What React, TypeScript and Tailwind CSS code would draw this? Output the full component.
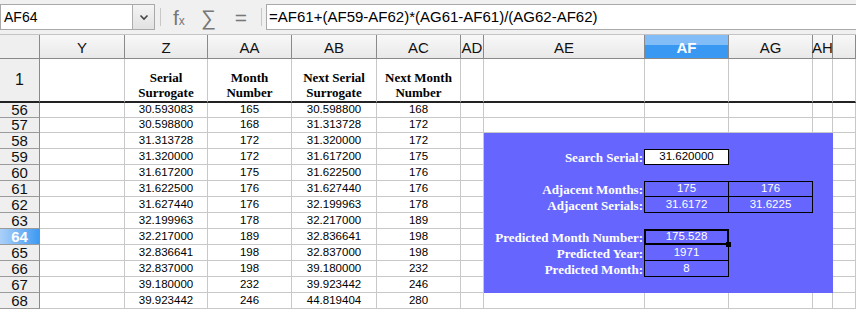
import React from 'react';

const SANS = "font-['Liberation_Sans',Arial,sans-serif]";
const SERIF = "font-['Liberation_Serif','Times_New_Roman',serif]";

const COLS = ['Y', 'Z', 'AA', 'AB', 'AC', 'AD', 'AE', 'AF', 'AG', 'AH', ''];

const ROWS: [number, string, number, string, number][] = [
  [56, '30.593083', 165, '30.598800', 168],
  [57, '30.598800', 168, '31.313728', 172],
  [58, '31.313728', 172, '31.320000', 172],
  [59, '31.320000', 172, '31.617200', 175],
  [60, '31.617200', 175, '31.622500', 176],
  [61, '31.622500', 176, '31.627440', 176],
  [62, '31.627440', 176, '32.199963', 178],
  [63, '32.199963', 178, '32.217000', 189],
  [64, '32.217000', 189, '32.836641', 198],
  [65, '32.836641', 198, '32.837000', 198],
  [66, '32.837000', 198, '39.180000', 232],
  [67, '39.180000', 232, '39.923442', 246],
  [68, '39.923442', 246, '44.819404', 280],
];

const cell = 'border-r border-b border-[#c8c8c8] bg-white';
const num = `${cell} flex items-center justify-center text-[11.5px] leading-none text-black`;

function Toolbar() {
  return (
    <div className={`h-[35px] flex items-center bg-[#f0f0f0] border-b border-[#c4c4c4] ${SANS}`}>
      <div className="w-[155px] h-[26px] bg-white border border-[#a9a9a9] flex items-center justify-between">
        <span className="pl-[3px] text-[14px] text-black">AF64</span>
        <div className="w-[22px] h-[24px] bg-linear-to-b from-[#f4f4f4] to-[#e2e2e2] border-l border-[#adadad] flex items-center justify-center">
          <svg width="10" height="7" viewBox="0 0 10 7">
            <path d="M1.5 1.5 L5 5 L8.5 1.5" fill="none" stroke="#444" strokeWidth="1.6" />
          </svg>
        </div>
      </div>
      <div className="ml-[5px] w-px h-[18px] bg-[#c8c8c8]" />
      <div className="ml-[12px] flex items-end text-[#777] leading-none">
        <span className="text-[21px] font-light">f</span>
        <span className="text-[12px] mb-[1px]">x</span>
      </div>
      <span className="ml-[16px] text-[21px] text-[#777] leading-none">∑</span>
      <span className="ml-[19px] text-[21px] text-[#777] leading-none">=</span>
      <div className="ml-[14px] w-px h-[18px] bg-[#c8c8c8]" />
      <div className="ml-[4px] flex-1 h-[26px] bg-white border border-[#a9a9a9] border-r-0 flex items-center">
        <span className="pl-[2px] text-[15px] text-black whitespace-nowrap">
          =AF61+(AF59-AF62)*(AG61-AF61)/(AG62-AF62)
        </span>
      </div>
    </div>
  );
}

function Panel() {
  const label = `flex items-center justify-end pr-[1px] text-white font-bold text-[13px] leading-none ${SERIF}`;
  const val = 'flex items-center justify-center text-white text-[11.5px] leading-none border-black';
  return (
    <div className="col-start-8 col-span-4 row-start-5 row-span-10 bg-[#6666ff] grid grid-cols-[160px_85px_84px_1fr] grid-rows-[repeat(10,16px)]">
      <div className={`${label} col-start-1 row-start-2`}>Search Serial:</div>
      <div className="col-start-2 row-start-2 flex items-center justify-center bg-white border border-black text-black text-[11.5px] leading-none">
        31.620000
      </div>

      <div className={`${label} col-start-1 row-start-4`}>Adjacent Months:</div>
      <div className={`${val} col-start-2 row-start-4 border`}>175</div>
      <div className={`${val} col-start-3 row-start-4 border-t border-r border-b`}>176</div>
      <div className={`${label} col-start-1 row-start-5`}>Adjacent Serials:</div>
      <div className={`${val} col-start-2 row-start-5 border-l border-r border-b`}>31.6172</div>
      <div className={`${val} col-start-3 row-start-5 border-r border-b`}>31.6225</div>

      <div className={`${label} col-start-1 row-start-7`}>Predicted Month Number:</div>
      <div className={`${val} col-start-2 row-start-7 border-2 relative`}>
        175.528
        <span className="absolute -right-[4px] -bottom-[4px] w-[5px] h-[5px] bg-black" />
      </div>
      <div className={`${label} col-start-1 row-start-8`}>Predicted Year:</div>
      <div className={`${val} col-start-2 row-start-8 border-l border-r border-b`}>1971</div>
      <div className={`${label} col-start-1 row-start-9`}>Predicted Month:</div>
      <div className={`${val} col-start-2 row-start-9 border-l border-r border-b`}>8</div>
    </div>
  );
}

export default function App() {
  return (
    <div className={`w-[856px] h-[309px] overflow-hidden bg-white ${SANS}`}>
      <Toolbar />
      <div className="grid grid-cols-[40px_85px_83px_84px_85px_84px_23px_161px_84px_84px_20px_1fr] grid-rows-[24px_44px_15px_15px_16px_16px_16px_16px_16px_16px_16px_16px_16px_16px_16px]">
        {/* column headers */}
        <div className="bg-[#efefef] border-r border-b border-[#8a8a8a]" />
        {COLS.map((c) =>
          c === 'AF' ? (
            <div
              key={c}
              className="bg-[linear-gradient(to_bottom,#82bdf8_0%,#82bdf8_42%,#3898f2_42%,#3898f2_100%)] border-r border-b border-[#8a8a8a] flex items-center justify-center text-white font-bold text-[15px] leading-none pt-[2px]"
            >
              {c}
            </div>
          ) : (
            <div
              key={c || 'AI'}
              className="bg-linear-to-b from-[#f8f8f8] to-[#e9e9e9] border-r border-b border-[#8a8a8a] flex items-center justify-center text-[#111] text-[15px] leading-none pt-[2px]"
            >
              {c}
            </div>
          )
        )}

        {/* row 1 */}
        <div className="bg-[#efefef] border-r border-[#8a8a8a] border-b-2 border-b-[#222] flex items-center justify-center text-[16px] text-[#111]">
          1
        </div>
        {['', 'Serial\nSurrogate', 'Month\nNumber', 'Next Serial\nSurrogate', 'Next Month\nNumber', '', '', '', '', '', ''].map((t, i) => (
          <div
            key={i}
            className={`border-r border-[#c8c8c8] border-b-2 border-b-[#222] bg-white flex items-end justify-center pb-[1px] text-center whitespace-pre-line text-[13px] leading-[15px] font-bold text-black ${SERIF}`}
          >
            {t}
          </div>
        ))}

        {/* data rows */}
        {ROWS.map(([r, a, b, c, d]) => {
          const covered = r >= 58 && r <= 67;
          return (
            <React.Fragment key={r}>
              {r === 64 ? (
                <div className="bg-linear-to-r from-[#aad0f8] to-[#3c9af2] border-r border-b border-r-[#8a8a8a] border-b-[#9a9a9a] flex items-center justify-center text-[15px] leading-[14px] font-bold text-white overflow-hidden">
                  {r}
                </div>
              ) : (
                <div className="bg-[#efefef] border-r border-b border-r-[#8a8a8a] border-b-[#9a9a9a] flex items-center justify-center text-[15px] leading-[14px] text-[#111] overflow-hidden">
                  {r}
                </div>
              )}
              <div className={cell} />
              <div className={num}>{a}</div>
              <div className={num}>{b}</div>
              <div className={num}>{c}</div>
              <div className={num}>{d}</div>
              <div className={cell} />
              {!covered && (
                <>
                  <div className={cell} />
                  <div className={cell} />
                  <div className={cell} />
                  <div className={cell} />
                </>
              )}
              <div className={cell} />
            </React.Fragment>
          );
        })}

        <Panel />
      </div>
    </div>
  );
}
